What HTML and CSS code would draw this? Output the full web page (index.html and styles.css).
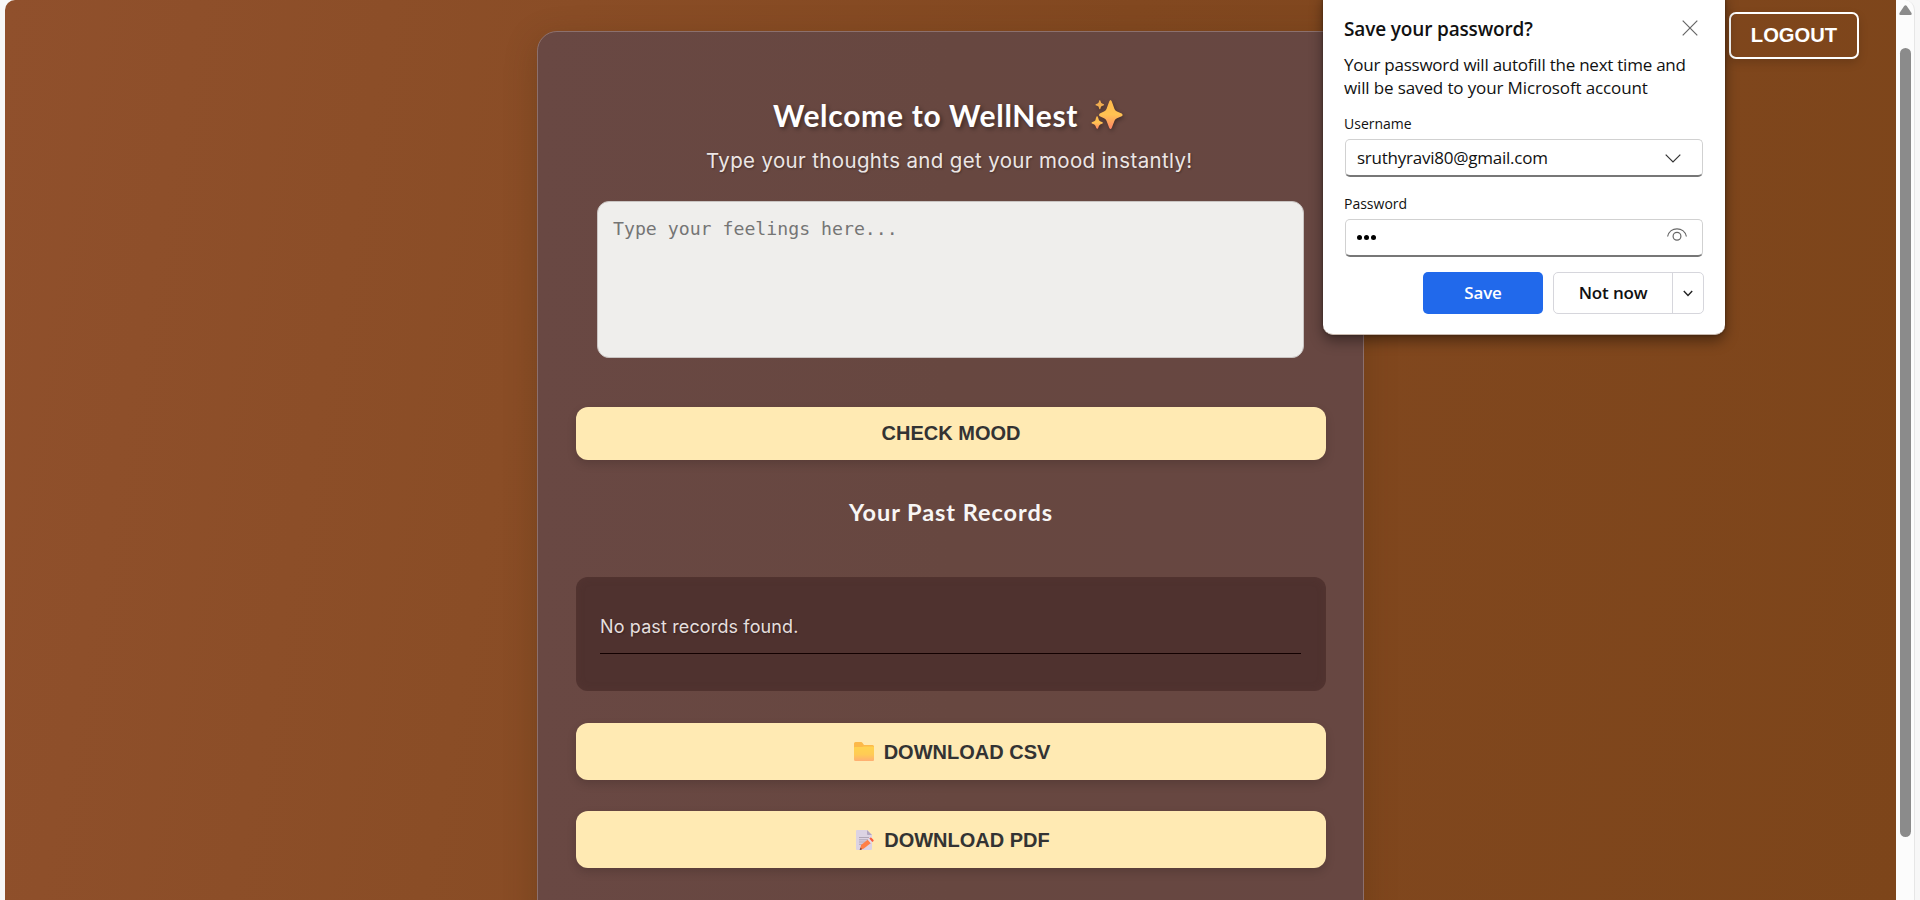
FILE: index.html
```
<!DOCTYPE html>
<html lang="en">
<head>
<meta charset="utf-8">
<title>WellNest</title>
<link rel="stylesheet" href="styles.css">
</head>
<body>
<div class="window">
  <main class="page">
    <section class="card">
      <h1 class="title"><span class="title-text">Welcome to WellNest</span>
        <svg class="sparkles" viewBox="0 0 32 32" width="32" height="32">
          <defs><linearGradient id="spark" x1="0" y1="0" x2="0" y2="1"><stop offset="0" stop-color="#ffb84a"/><stop offset=".5" stop-color="#ffc352"/><stop offset="1" stop-color="#ff8468"/></linearGradient></defs>
          <path fill="url(#spark)" d="M18.200 2.500Q19.500-.5 20.800 2.500L23.500 10Q24.200 11.800 26 12.500L30.700 14.500Q32.500 16 30.700 17.200L26 19.200Q24.200 19.900 23.500 21.700L20.800 28.700Q19.500 31.500 18.200 28.700L15.500 21.700Q14.800 19.900 13 19.200L8.800 17.200Q7.300 16 8.800 14.500L13 12.500Q14.800 11.800 15.500 10Z"/>
          <path fill="url(#spark)" d="M6.200 17Q7 18 8 21.200Q8.500 22.200 11.500 23.200Q12.500 24 11.500 24.600Q8.600 25.600 8 26.700Q7 30 6.200 30Q5.400 30 4.400 26.700Q3.900 25.600.9 24.600Q0 24 .9 23.200Q3.900 22.200 4.400 21.200Q5.400 17 6.200 17Z"/>
          <path fill="#f0ad50" d="M8.800 1Q9.400 1 10.100 3.800Q10.600 4.400 12.900 5.200Q13.300 5.700 12.900 6.200Q10.600 7 10.100 7.600Q9.400 10.300 8.800 10.300Q8.200 10.300 7.500 7.600Q7 7 4.700 6.200Q4.300 5.700 4.700 5.200Q7 4.400 7.500 3.800Q8.200 1 8.800 1Z"/>
        </svg>
      </h1>
      <p class="subtitle"><span>Type your thoughts and get your mood instantly!</span></p>
      <textarea class="feelings" placeholder="Type your feelings here..."></textarea>
      <button class="action check">CHECK MOOD</button>
      <h2 class="records-title"><span>Your Past Records</span></h2>
      <div class="records"><p class="record">No past records found.</p></div>
      <button class="action download">
        <svg class="folder" viewBox="0 0 20 19" width="20" height="19">
          <defs><linearGradient id="fold" x1="0" y1="0" x2="0" y2="1"><stop offset="0" stop-color="#ffd34f"/><stop offset=".55" stop-color="#ffcb55"/><stop offset="1" stop-color="#ffae73"/></linearGradient></defs>
          <path fill="#fcb94a" d="M1.500 0H7Q8 0 8.600.9L10 3H18.500Q20 3 20 4.500V10H0V1.500Q0 0 1.500 0Z"/>
          <path fill="url(#fold)" d="M0 6Q0 5 1 5H8L9.500 4.500H19Q20 4.500 20 5.500V18Q20 19 19 19H1.500Q0 19 0 17.500Z"/>
        </svg>
        <span class="csv-text">DOWNLOAD CSV</span></button>
      <button class="action download pdf">
        <svg class="memo" viewBox="0 0 18 20" width="18" height="20">
          <path fill="#dcd3e3" d="M1 0H11L16 5V19Q16 20 15 20H1Q0 20 0 19V1Q0 0 1 0Z"/>
          <path fill="#b3a6c0" d="M11 0L16 5H12Q11 5 11 4Z"/>
          <path stroke="#aaa0b2" stroke-width=".9" d="M3 7.500H13M3 9.800H12M3 12H10M3 14.300H7"/>
          <path fill="#ff8048" d="M5 15L12 9.500L15 13L7.500 18.700L4 20Z"/>
          <path fill="#e5dce9" d="M11.700 9.800L13.300 8.500L16.300 11.900L14.800 13.200Z"/>
          <path fill="#fa5d3e" d="M13.300 8.500L14.500 7.600Q15.300 7.500 17.500 10Q18.200 11 16.300 11.900Z"/>
          <path fill="#6b3b35" d="M4.700 17.600L6 19.300L3.600 20Z"/>
        </svg>
        <span class="pdf-text">DOWNLOAD PDF</span></button>
    </section>
    <button class="logout">LOGOUT</button>
  </main>
  <div class="scrollbar">
    <svg class="arrow" viewBox="0 0 13 10" width="13" height="10"><path fill="#8b8b8b" d="M5.200 1Q6.500-.6 7.800 1L12.500 8Q13.200 10 11.500 10H1.500Q-.2 10 .5 8Z"/></svg>
    <div class="thumb"></div>
  </div>
  <div class="window-edge"></div>
</div>

<aside class="dialog">
  <header class="dialog-head">
    <strong class="dialog-title">Save your password?</strong>
    <svg class="close" viewBox="0 0 16 16" width="16" height="16"><path d="M.7.700L15.300 15.300M15.300.700L.7 15.300"/></svg>
  </header>
  <p class="dialog-copy"><span class="copy-a">Your password will autofill the next time and</span><br><span class="copy-b">will be saved to your Microsoft account</span></p>
  <label class="label user-label">Username</label>
  <div class="field"><span class="email">sruthyravi80@gmail.com</span>
    <svg class="chevron" viewBox="0 0 16 9" width="16" height="9"><path d="M.7.700L8 8L15.300.700"/></svg></div>
  <label class="label pass-label">Password</label>
  <div class="field"><span class="dots"><i></i><i></i><i></i></span>
    <svg class="eye" viewBox="0 0 20 13" width="20" height="13"><path d="M.6 8.500C2.700-1.800 17.300-1.800 19.400 8.500"/><circle cx="10" cy="8.300" r="3.900"/></svg></div>
  <div class="dialog-actions">
    <button class="save">Save</button>
    <div class="split"><button class="not-now">Not now</button><button class="more"><svg viewBox="0 0 10 7" width="10" height="7"><path d="M.8 1L5 5.500L9.200 1"/></svg></button></div>
  </div>
</aside>
</body>
</html>
```
FILE: styles.css
```
* { box-sizing: border-box; }
body { margin: 0; background: #f7f7f7; overflow: hidden; }
h1, h2, p { margin: 0; }
button { border: 0; margin: 0; padding: 0; }
svg { display: block; fill: none; flex: none; }

.window { display: flex; height: 900px; padding-left: 5px; }
.page {
  position: relative;
  width: 1891px;
  padding: 31px 0 0 532px;
  border-radius: 10px 0 0 0;
  background: linear-gradient(100deg, #90502c 0%, #8a4d26 28%, #824820 55%, #7d451a 100%);
  overflow: hidden;
}
.card {
  display: flex;
  flex-direction: column;
  width: 827px;
  height: 960px;
  padding: 60px 37px 0 38px;
  border: 1px solid #8c706d;
  border-radius: 20px;
  background: linear-gradient(90deg, #694843, #674740 50%, #674742);
  box-shadow: 0 8px 32px rgba(60, 40, 0, .25);
}
.title {
  display: flex;
  align-items: center;
  height: 47px;
  padding-left: 197px;
  gap: 14px;
  color: #fff;
  font: 700 30px/46px Lato, sans-serif;
  text-shadow: 2px 2px 4px rgba(0, 0, 0, .4);
}
.title-text { width: 304px; margin-top: -2px; white-space: nowrap; letter-spacing: .7px; }
.sparkles { margin-top: -1px; filter: drop-shadow(1px 2px 2px rgba(0, 0, 0, .35)); }
.subtitle {
  height: 62px;
  padding: 6px 0 0 130px;
  color: #ece6e5;
  font: 400 20.500px/32px Inter, sans-serif;
  letter-spacing: .35px;
  white-space: nowrap;
  text-shadow: 1px 1px 2px rgba(0, 0, 0, .3);
}
.feelings {
  display: block;
  width: 707px;
  height: 157px;
  margin-left: 21px;
  padding: 14px 15px;
  border: 1px solid #c9c4c2;
  border-radius: 12px;
  background: #efeeec;
  resize: none;
  font: 18.200px/26px "DejaVu Sans Mono", monospace;
}
.feelings::placeholder { color: #757575; opacity: 1; }
.action {
  display: flex;
  align-items: center;
  justify-content: center;
  flex: none;
  width: 750px;
  border-radius: 12px;
  background: #ffeab3;
  color: #333;
  font: 700 20px/24px "Liberation Sans", sans-serif;
  box-shadow: 0 4px 10px rgba(0, 0, 0, .15);
}
.check { height: 53px; margin-top: 49px; padding-bottom: 2px; }
.records-title {
  height: 117px;
  padding: 36px 0 0 273px;
  color: #f8f6f5;
  font: 700 23.500px/32px Lato, sans-serif;
  letter-spacing: .95px;
}
.records {
  height: 114px;
  padding: 36px 25px 0 24px;
  border-radius: 12px;
  background: #4f322f;
  box-shadow: inset 0 0 8px rgba(100, 65, 60, .25);
}
.record {
  height: 41px;
  border-bottom: 1px solid #120000;
  color: #e5dfde;
  font: 400 18px/28px Inter, sans-serif;
  letter-spacing: .13px;
  text-shadow: 1px 1px 2px rgba(0, 0, 0, .3);
}
.download { height: 57px; margin-top: 32px; padding-left: 2px; gap: 10px; }
.pdf { margin-top: 31px; padding-left: 4px; }
.logout {
  position: absolute;
  left: 1724px;
  top: 12px;
  width: 130px;
  height: 47px;
  padding-bottom: 2px;
  border: 2px solid #fff;
  border-radius: 7px;
  background: transparent;
  color: #fff;
  font: 700 20.200px/24px "Liberation Sans", sans-serif;
  box-shadow: 0 4px 10px rgba(0, 0, 0, .15);
}
.scrollbar { width: 19px; padding: 5px 0 0 3px; background: #fcfcfc; border-right: 1px solid #e6e6e6; border-radius: 0 10px 0 0; }
.thumb { width: 11px; height: 789px; margin: 33px 0 0 1px; border-radius: 6px; background: #8b8b8b; }
.window-edge { flex: 1; background: #f7f7f7; }

.dialog {
  position: absolute;
  left: 1323px;
  top: -10px;
  width: 402px;
  height: 345px;
  padding: 24px 21px 0;
  border-radius: 10px;
  border-bottom: 1px solid #c9b9ae;
  background: #fff;
  color: #111;
  font-family: "Open Sans", sans-serif;
  box-shadow: 0 6px 14px rgba(0, 0, 0, .4), 0 0 3px rgba(0, 0, 0, .4);
}
.dialog-head { display: flex; justify-content: space-between; height: 35px; padding-right: 6px; }
.dialog-title { font-size: 19px; line-height: 30px; font-weight: 600; letter-spacing: -.15px; }
.close { margin-top: 6px; stroke: #666; stroke-width: 1.200; }
.dialog-copy { height: 65px; padding-top: 4px; font-size: 17px; line-height: 23px; letter-spacing: -.24px; white-space: nowrap; }
.copy-b { letter-spacing: -.13px; }
.label { display: block; font-size: 14px; line-height: 20px; height: 25px; }
.field {
  display: flex;
  align-items: center;
  justify-content: space-between;
  width: 358px;
  height: 38px;
  margin-left: 1px;
  padding: 0 21px 0 11px;
  border: 1px solid #d1d1d1;
  border-bottom: 2px solid #777;
  border-radius: 5px;
  font-size: 17px;
  letter-spacing: -.24px;
}
.pass-label { margin-top: 17px; }
.chevron { stroke: #333; stroke-width: 1.200; margin-top: 2px; }
.eye { stroke: #666; stroke-width: 1.200; margin: -6px -6px 0 0; }
.dots { display: flex; gap: 2px; }
.dots i { width: 5px; height: 5px; border-radius: 50%; background: #000; }
.dialog-actions { display: flex; justify-content: flex-end; gap: 10px; margin-top: 15px; }
.dialog-actions button { height: 42px; font: 600 17px/22px "Open Sans", sans-serif; letter-spacing: -.15px; }
.save { width: 120px; border-radius: 5px; background: #2169eb; color: #fff; }
.split { display: flex; width: 151px; height: 42px; border: 1px solid #d6d6dc; border-radius: 5px; }
.dialog-actions .split button { height: 40px; background: none; color: #111; }
.not-now { width: 119px; }
.dialog-actions .split .more { display: flex; align-items: center; justify-content: center; width: 31px; border-left: 1px solid #d6d6dc; }
.more svg { stroke: #222; stroke-width: 1.400; }
```
